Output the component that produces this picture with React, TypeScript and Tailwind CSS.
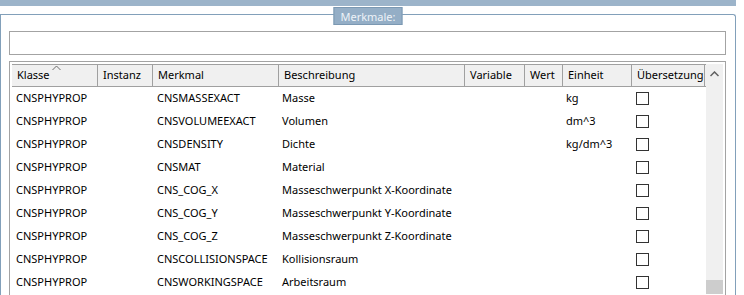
import React from "react";

const columns = [
  { label: "Klasse", w: "w-[86px]" },
  { label: "Instanz", w: "w-[55px]" },
  { label: "Merkmal", w: "w-[126px]" },
  { label: "Beschreibung", w: "w-[186px]" },
  { label: "Variable", w: "w-[60px]" },
  { label: "Wert", w: "w-[38px]" },
  { label: "Einheit", w: "w-[69px]" },
  { label: "Übersetzung", w: "w-[73px]" },
];

const rows = [
  ["CNSMASSEXACT", "Masse", "kg"],
  ["CNSVOLUMEEXACT", "Volumen", "dm^3"],
  ["CNSDENSITY", "Dichte", "kg/dm^3"],
  ["CNSMAT", "Material", ""],
  ["CNS_COG_X", "Masseschwerpunkt X-Koordinate", ""],
  ["CNS_COG_Y", "Masseschwerpunkt Y-Koordinate", ""],
  ["CNS_COG_Z", "Masseschwerpunkt Z-Koordinate", ""],
  ["CNSCOLLISIONSPACE", "Kollisionsraum", ""],
  ["CNSWORKINGSPACE", "Arbeitsraum", ""],
];

function Row({ merkmal, text, unit }: { merkmal: string; text: string; unit: string }) {
  return (
    <div className="flex h-[23px] items-center whitespace-nowrap text-black">
      <div className="w-[86px] pl-[4px]">CNSPHYPROP</div>
      <div className="w-[55px]" />
      <div className="w-[126px] pl-[4px]">{merkmal}</div>
      <div className="w-[186px] pl-[3px]">{text}</div>
      <div className="w-[60px]" />
      <div className="w-[38px]" />
      <div className="w-[69px] pl-[3px]">{unit}</div>
      <div className="w-[73px] pl-[4px]">
        <div className="h-[13px] w-[13px] border border-[#333] bg-white" />
      </div>
    </div>
  );
}

export default function App() {
  return (
    <div
      className="relative h-[295px] w-[744px] overflow-hidden bg-white text-[11px]"
      style={{ fontFamily: '"Noto Sans", "Liberation Sans", sans-serif' }}
    >
      <div className="h-[6px] w-[736px] bg-[#9cb4ca]" />
      <div className="relative mt-[8px] w-[736px] rounded-tr-[3px] border-l border-r border-t border-[#82a0ba] pb-[40px]">
        <div className="absolute left-1/2 top-[-8px] flex h-[18px] -translate-x-1/2 items-center border border-[#7b98b2] bg-[#94aec6] px-[6px] leading-none text-[#eef3f8]">
          Merkmale:
        </div>

        <div className="ml-[8px] mt-[16px] h-[24px] w-[717px] border border-[#a3a3a3] bg-white" />

        <div className="ml-[8px] mt-[6px] w-[717px] border border-[#a3a3a3] p-[2px]">
          <div className="flex">
            <div className="w-[694px]">
              <div className="flex h-[23px] border-y border-[#a0a0a0] bg-[#f0f0f0]">
                {columns.map((c) => (
                  <div
                    key={c.label}
                    className={`${c.w} relative flex items-center border-r border-[#a0a0a0] pl-[5px] text-black`}
                  >
                    {c.label}
                    {c.label === "Klasse" && (
                      <svg className="absolute left-[40px] top-[0px]" width="9" height="6" viewBox="0 0 9 6">
                        <polyline points="0.5,5 4.5,1 8.5,5" fill="none" stroke="#6d6d6d" strokeWidth="1" />
                      </svg>
                    )}
                  </div>
                ))}
              </div>
              {rows.map((r) => (
                <Row key={r[0]} merkmal={r[0]} text={r[1]} unit={r[2]} />
              ))}
            </div>
            <div className="flex w-[17px] flex-col bg-[#f0f0f0]">
              <div className="flex h-[17px] items-center justify-center pt-[3px]">
                <svg width="9" height="6" viewBox="0 0 9 6">
                  <polyline points="0.5,5 4.5,1 8.5,5" fill="none" stroke="#606060" strokeWidth="1.5" />
                </svg>
              </div>
              <div className="flex-1" />
              <div className="h-[14px] bg-[#cdcdcd]" />
            </div>
          </div>
        </div>
      </div>
    </div>
  );
}
